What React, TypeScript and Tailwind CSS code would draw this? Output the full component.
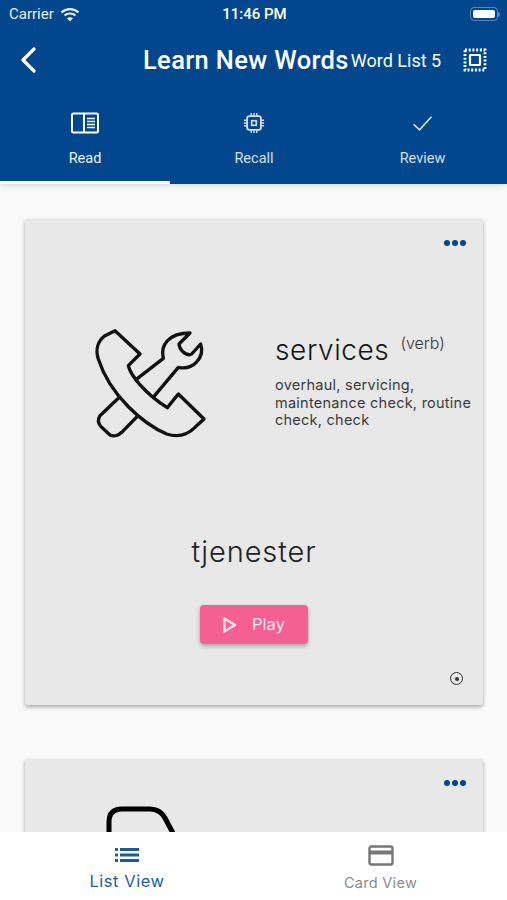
const sans = '[font-family:Roboto,"Liberation_Sans",sans-serif]'
const body = '[font-family:Inter,"Liberation_Sans",sans-serif]'

function WifiIcon() {
  return (
    <svg width="20" height="15" viewBox="0 0 20 15" fill="none" stroke="#e8eef6" strokeWidth="2.2">
      <path d="M1.5 5.5C6.3 1 13.7 1 18.500 5.500" />
      <path d="M4.500 8.500C7.500 5.800 12.500 5.800 15.500 8.500" />
      <path d="M10 14.500L7 11.300C8.700 9.900 11.300 9.900 13 11.300Z" fill="#e8eef6" stroke="none" />
    </svg>
  )
}

function Battery() {
  return (
    <div className="flex items-center">
      <div className="w-[28px] h-[14px] rounded-[4px] border border-[#5c83b5] p-[2px]">
        <div className="w-full h-full rounded-[2px] bg-white" />
      </div>
      <div className="w-[2px] h-[5px] bg-[#5c83b5] rounded-r" />
    </div>
  )
}

function FocusIcon() {
  return (
    <svg width="24" height="24" viewBox="0 0 24 24" fill="none" stroke="white">
      <rect x="2" y="2" width="20" height="20" strokeWidth="2.800" strokeDasharray="2 1.700" />
      <rect x="7" y="7" width="10" height="10" rx="0.500" strokeWidth="2.200" />
    </svg>
  )
}

function ReadIcon() {
  return (
    <svg width="28" height="22" viewBox="0 0 28 22" fill="none" stroke="white" strokeWidth="2">
      <rect x="1" y="1.500" width="26" height="19" rx="1.500" />
      <path d="M13 1.500V20.500" />
      <path d="M16 6.500H24M16 9.500H24M16 12.500H24M16 15.500H24" strokeWidth="1.400" />
    </svg>
  )
}

function ChipIcon() {
  return (
    <svg width="22" height="22" viewBox="0 0 24 24" fill="none" stroke="#d5e0ee" strokeWidth="2">
      <rect x="4.500" y="4.500" width="15" height="15" rx="2.500" />
      <rect x="9.500" y="9.500" width="5" height="5" strokeWidth="1.800" />
      <path d="M9 1V4M12 1V4M15 1V4M9 20V23M12 20V23M15 20V23M1 9H4M1 12H4M1 15H4M20 9H23M20 12H23M20 15H23" strokeWidth="1.500" />
    </svg>
  )
}

function CheckIcon() {
  return (
    <svg width="21" height="17" viewBox="0 0 24 20" fill="none" stroke="#d5e0ee" strokeWidth="2">
      <path d="M1.500 11L8.500 17.500L22.500 2" />
    </svg>
  )
}

function ToolsPhoneIcon() {
  return (
    <svg width="140" height="140" viewBox="0 0 420 420" fill="none" stroke="#111" strokeWidth="10" strokeLinejoin="round" strokeLinecap="round">
      <path d="M105 65L180 135L145 170C150 195 190 250 262 296L295 255L372 330L345 355C320 380 290 385 260 375C190 345 90 260 55 150C45 120 55 95 75 80Z" />
      <path d="M168 212L250 148C240 110 265 72 330 72L297 105C300 130 325 142 335 135L362 105C375 145 340 185 295 175L222 262" />
      <path d="M118 265L60 320C50 335 55 345 65 355L90 378C105 385 115 378 125 370L172 322" />
    </svg>
  )
}

function Dots() {
  return (
    <div className="absolute top-[21px] right-[17px] flex gap-[2px]">
      <span className="w-[6px] h-[6px] rounded-full bg-[#02478e]" />
      <span className="w-[6px] h-[6px] rounded-full bg-[#02478e]" />
      <span className="w-[6px] h-[6px] rounded-full bg-[#02478e]" />
    </div>
  )
}

function Tab({ label, active, icon }: { label: string; active?: boolean; icon: React.ReactNode }) {
  return (
    <div className={`h-[83px] flex flex-col items-center border-b-[3px] ${active ? 'border-white' : 'border-transparent'}`}>
      <div className="h-[24px] mt-[10px] flex items-center justify-center">{icon}</div>
      <div className={`mt-[15px] text-[14.500px] leading-[18px] ${active ? 'text-[#f0f4f9]' : 'text-[#d5e0ee]'}`}>{label}</div>
    </div>
  )
}

export default function App() {
  return (
    <div className={`h-[900px] w-[507px] flex flex-col overflow-hidden bg-[#fafafa] ${sans}`}>
      <header className="bg-[#02478e] h-[184px] shrink-0 shadow-[0_2px_6px_rgba(0,0,0,0.12)] z-10">
        <div className="h-[28px] pl-[9px] pr-[7px] flex items-center justify-between text-[15px] text-[#e8eef6]">
          <div className="w-[120px] flex items-center gap-[6px]">
            Carrier
            <WifiIcon />
          </div>
          <div className="font-medium text-white">11:46 PM</div>
          <div className="w-[120px] flex justify-end">
            <Battery />
          </div>
        </div>

        <div className="h-[64px] flex items-center pl-[20px] pr-[20px] text-white">
          <svg width="16" height="26" viewBox="0 0 16 26" fill="none" stroke="white" strokeWidth="3.200" strokeLinecap="round" strokeLinejoin="round">
            <path d="M14 2L3 13L14 24" />
          </svg>
          <div className="ml-[107px] text-[25.500px] font-medium tracking-[0.35px] whitespace-nowrap">Learn New Words</div>
          <div className="ml-[2px] text-[18px] whitespace-nowrap">Word List 5</div>
          <div className="ml-auto">
            <FocusIcon />
          </div>
        </div>

        <div className="grid grid-cols-[170px_168px_169px] h-[92px] pt-[9px]">
          <Tab label="Read" active icon={<ReadIcon />} />
          <Tab label="Recall" icon={<ChipIcon />} />
          <Tab label="Review" icon={<CheckIcon />} />
        </div>
      </header>

      <main className={`flex-1 min-h-0 overflow-hidden px-[25px] pt-[35px] ${body}`}>
        <section className="relative h-[486px] w-[458px] bg-[#e8e8e8] rounded-[3px] shadow-[0_2px_4px_rgba(0,0,0,0.35)]">
          <Dots />
          <div className="flex pt-[90px] pl-[55px]">
            <ToolsPhoneIcon />
            <div className="ml-[55px] pt-[23px]">
              <div className="flex items-start">
                <span className="text-[28px] leading-[36px] tracking-[0.6px] font-light text-[#161616]">services</span>
                <span className="ml-[11px] mt-[-1px] text-[16px] leading-[24px] font-light text-[#333]">(verb)</span>
              </div>
              <p className="mt-[8px] w-[205px] text-[14.500px] leading-[17.500px] tracking-[0.25px] text-[#3a3a3a]">
                overhaul, servicing, maintenance check, routine check, check
              </p>
            </div>
          </div>

          <div className="mt-[85px] text-center text-[29px] leading-[36px] tracking-[0.9px] font-light text-[#222]">tjenester</div>

          <div className="mt-[35px] flex justify-center">
            <button type="button" className="w-[108px] h-[39px] rounded-[4px] bg-[#f46092] shadow-[0_2px_4px_rgba(0,0,0,0.3)] flex items-center justify-center gap-[15px] text-[16.500px] text-[#fde4ec]">
              <svg width="14" height="16" viewBox="0 0 14 16" fill="none" stroke="#fde4ec" strokeWidth="2.400" strokeLinejoin="round">
                <path d="M1.500 1.500L12 8L1.500 14.500Z" />
              </svg>
              Play
            </button>
          </div>

          <div className="absolute right-[20px] bottom-[20px] w-[13px] h-[13px] rounded-full border-[1.500px] border-[#333] flex items-center justify-center">
            <span className="w-[4px] h-[4px] rounded-full bg-[#333]" />
          </div>
        </section>

        <section className="relative mt-[54px] h-[300px] w-[458px] bg-[#e8e8e8] rounded-[3px] shadow-[0_2px_4px_rgba(0,0,0,0.35)]">
          <Dots />
          <svg className="absolute left-[80px] top-[46px]" width="72" height="40" viewBox="0 0 72 40" fill="none" stroke="black" strokeWidth="5">
            <path d="M4 30V17Q4 4 17 4H45Q55 4 60 13L70 32" />
          </svg>
        </section>
      </main>

      <nav className={`h-[68px] shrink-0 bg-white flex z-10 ${body}`}>
        <div className="w-[254px] flex flex-col items-center pt-[15px] text-[#235e9c]">
          <svg width="24" height="16" viewBox="0 0 24 16" fill="#1f5a99">
            <rect x="0" y="1" width="3" height="3" />
            <rect x="0" y="6.500" width="3" height="3" />
            <rect x="0" y="12" width="3" height="3" />
            <rect x="5" y="1" width="19" height="3" />
            <rect x="5" y="6.500" width="19" height="3" />
            <rect x="5" y="12" width="19" height="3" />
          </svg>
          <div className="mt-[7px] text-[16.500px] leading-[22px] tracking-[0.55px]">List View</div>
        </div>
        <div className="flex-1 flex flex-col items-center pt-[13px] text-[#8b8b8b]">
          <svg width="26" height="21" viewBox="0 0 26 21" fill="none" stroke="#767676" strokeWidth="2.400">
            <rect x="1.500" y="1.500" width="23" height="18" rx="2" />
            <rect x="1.500" y="5.500" width="23" height="4" fill="#767676" stroke="none" />
          </svg>
          <div className="mt-[7px] text-[14.500px] leading-[20px] tracking-[0.3px]">Card View</div>
        </div>
      </nav>
    </div>
  )
}
